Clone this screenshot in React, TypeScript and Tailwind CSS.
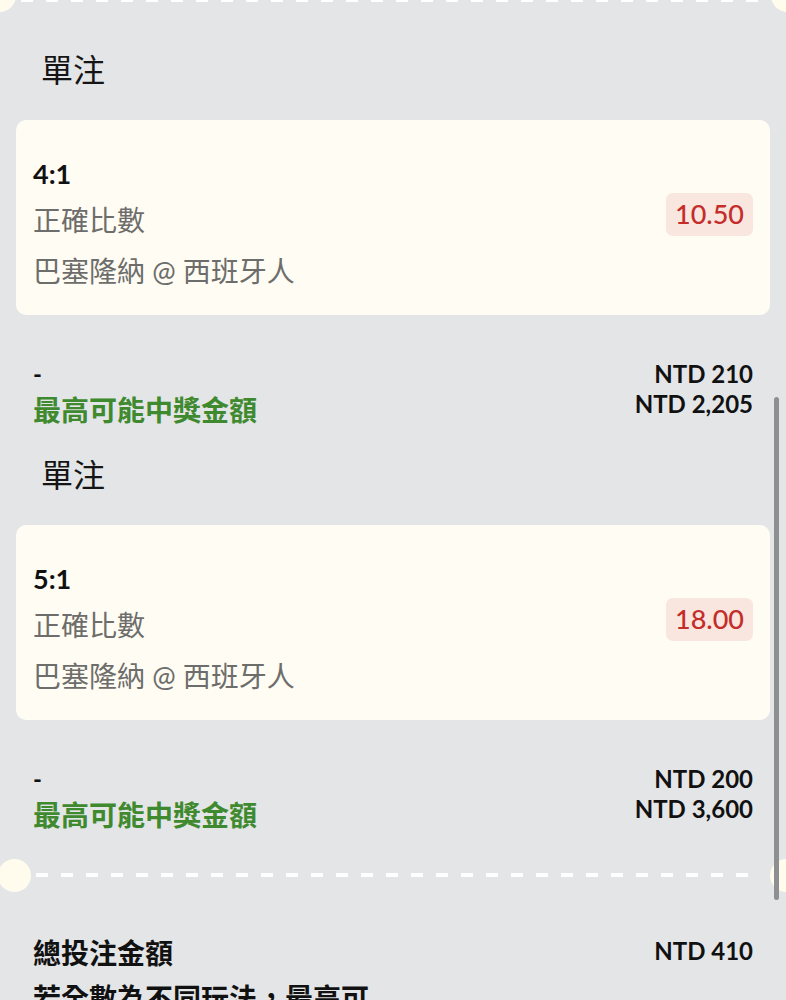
type Bet = {
    score: string
    market: string
    match: string
    odds: string
    stake: string
    payout: string
}

const bets: Bet[] = [
    { score: '4:1', market: '正確比數', match: '巴塞隆納 @ 西班牙人', odds: '10.50', stake: 'NTD 210', payout: 'NTD 2,205' },
    { score: '5:1', market: '正確比數', match: '巴塞隆納 @ 西班牙人', odds: '18.00', stake: 'NTD 200', payout: 'NTD 3,600' },
]

const Divider = ({ top }: { top?: boolean }) => {
    if (top) {
        return (
            <div className="relative h-[4px] -mt-[2px]">
                <div className="h-full ml-[21px] mr-[21px] bg-[repeating-linear-gradient(90deg,#ffffff_0_12px,transparent_12px_25px)]" />
                <span className="absolute left-[-17px] top-[-19px] w-[33px] h-[33px] rounded-full bg-[#fffcee]" />
                <span className="absolute right-[-18px] top-[-19px] w-[33px] h-[33px] rounded-full bg-[#fffcee]" />
            </div>
        )
    }
    return (
        <div className="relative h-[4px]">
            <div className="h-full ml-[36px] mr-[36px] bg-[repeating-linear-gradient(90deg,#ffffff_0_12px,transparent_12px_25px)]" />
            <span className="absolute left-[-2px] top-[-14px] w-[33px] h-[33px] rounded-full bg-[#fffcee]" />
            <span className="absolute right-[-17px] top-[-14px] w-[33px] h-[33px] rounded-full bg-[#fffcee]" />
        </div>
    )
}

const BetSection = ({ bet, first }: { bet: Bet, first?: boolean }) => {
    return (
        <section>
            <h3 className={`${first ? 'mt-[44px]' : 'mt-[25px]'} pl-[41px] text-[32px] leading-[48px] font-normal text-[#151515]`}>
                單注
            </h3>

            <div className="mt-[26px] mx-4 rounded-[10px] bg-[#fffcf3] px-[17px] pt-[38px] pb-[24px]">
                <p className="text-[27px] leading-[32px] font-bold text-[#111]">{bet.score}</p>
                <div className="mt-[10px] flex justify-between items-start">
                    <p className="text-[28px] leading-[40px] text-[#6d6d6b]">{bet.market}</p>
                    <span className="-mt-[7px] h-[43px] px-[9px] flex items-center rounded-[7px] bg-[#f8e6df] text-[27px] font-medium text-[#c42d29]">
                        {bet.odds}
                    </span>
                </div>
                <p className="mt-[11px] text-[28px] leading-[40px] text-[#6d6d6b]">{bet.match}</p>
            </div>

            <div className="mt-[44px] px-[33px] flex justify-between items-start">
                <div>
                    <p className="text-[24px] leading-[30px] font-bold text-[#111]">-</p>
                    <p className="mt-[5px] text-[28px] leading-[32px] font-bold text-[#3f8a2f]">最高可能中獎金額</p>
                </div>
                <div className="text-right">
                    <p className="text-[24px] leading-[30px] font-bold text-[#111]">{bet.stake}</p>
                    <p className="text-[24px] leading-[30px] font-bold text-[#111]">{bet.payout}</p>
                </div>
            </div>
        </section>
    )
}

const App = () => {
    return (
        <div className="relative min-h-screen overflow-hidden bg-[#e4e5e7] font-['Lato','Noto_Sans_CJK_TC',sans-serif] pb-16">
            <Divider top />

            {bets.map((bet, i) => (
                <BetSection key={bet.score} bet={bet} first={i === 0} />
            ))}

            <div className="mt-[42px]">
                <Divider />
            </div>

            <div className="mt-[60px] px-[33px] flex justify-between items-start">
                <div className="w-1/2">
                    <p className="text-[28px] leading-[32px] font-bold text-[#111]">總投注金額</p>
                    <p className="mt-[9px] text-[28px] leading-[40px] font-bold text-[#111]">若全數為不同玩法，最高可能中獎金額</p>
                </div>
                <div className="text-right">
                    <p className="text-[24px] leading-[28px] font-bold text-[#111]">NTD 410</p>
                    <p className="mt-[50px] text-[24px] leading-[28px] font-bold text-[#111]">NTD 5,805</p>
                </div>
            </div>

            {/* scroll thumb */}
            <div className="absolute right-[7px] top-[397px] w-[5px] h-[503px] rounded-full bg-[#8e8f91]" />
        </div>
    )
}

export default App
